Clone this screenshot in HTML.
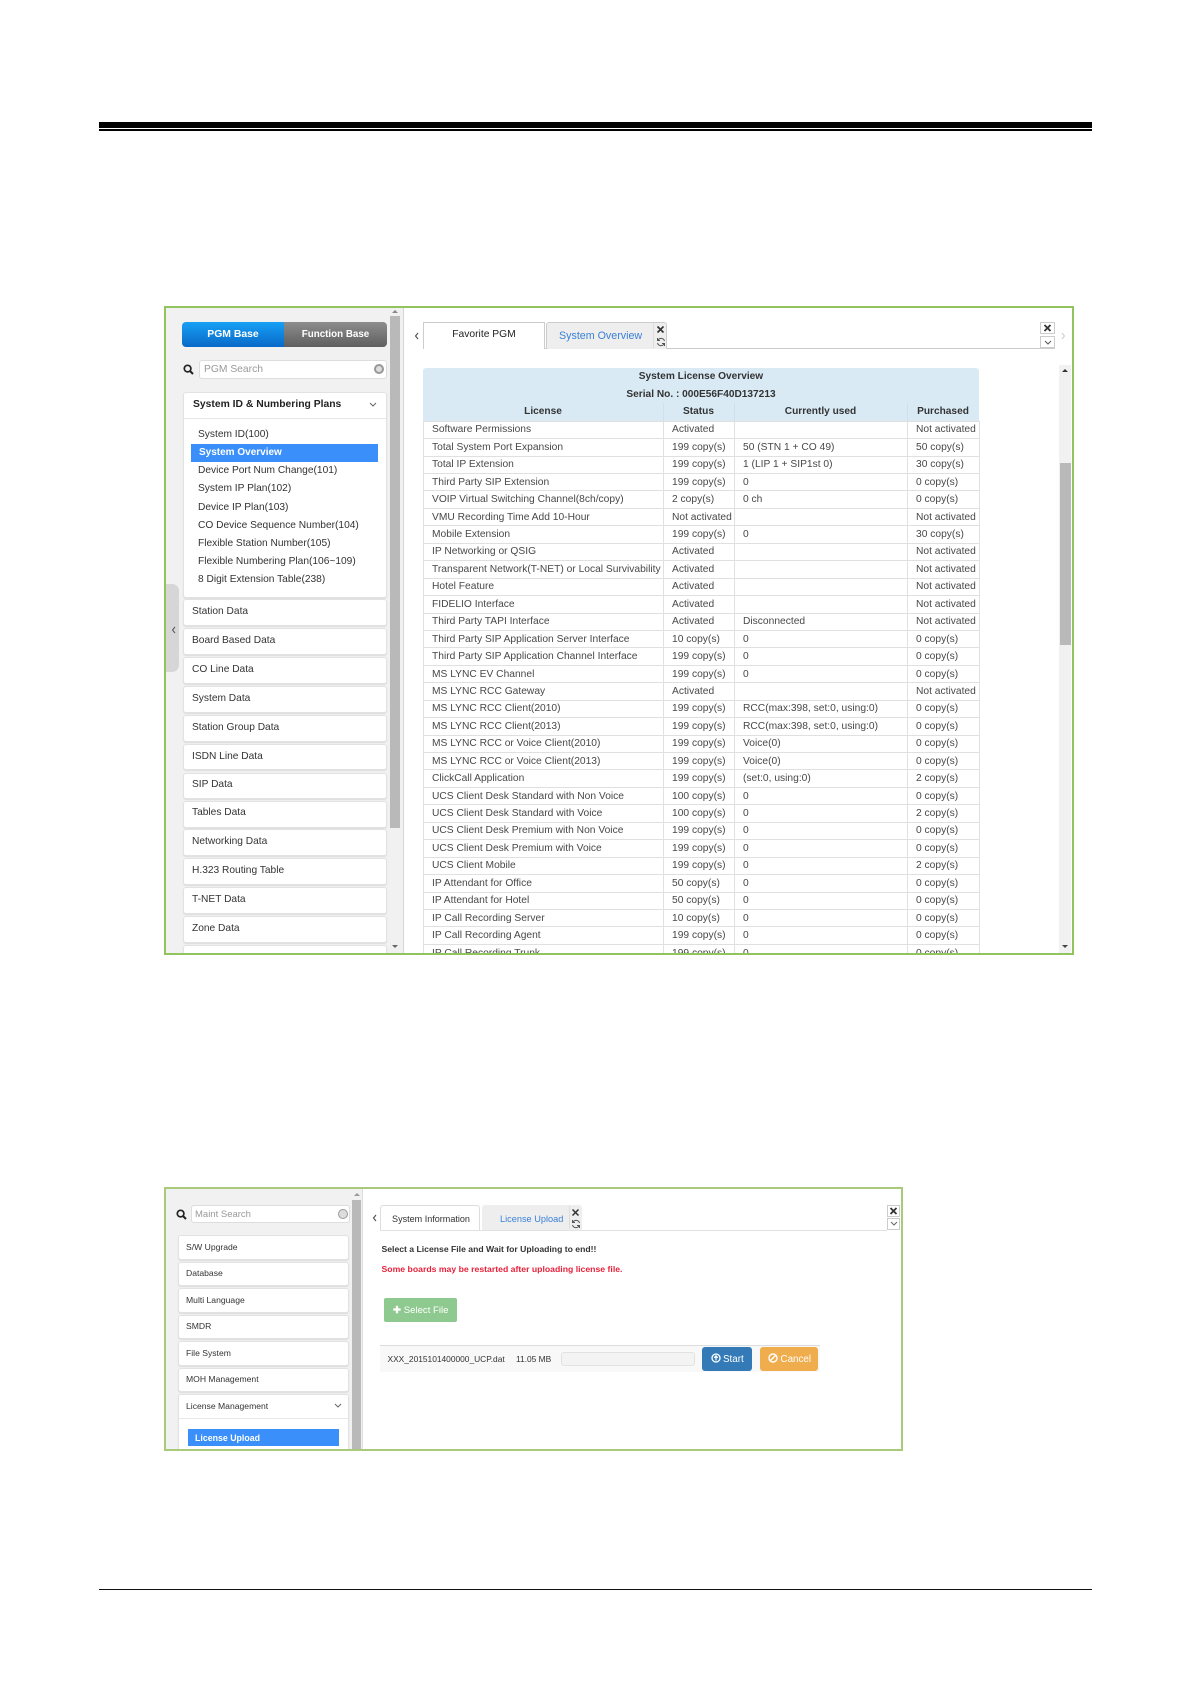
<!DOCTYPE html>
<html><head><meta charset="utf-8"><style>
html,body{margin:0;padding:0;background:#fff}
body{width:1191px;height:1684px;position:relative;overflow:hidden;font-family:"Liberation Sans",Arial,sans-serif;color:#333}
.a{position:absolute}
.t{position:absolute;white-space:nowrap;line-height:14px;height:14px}
.p{position:absolute;background:#fff;border:1px solid #e2e2e2;border-radius:3px;box-sizing:border-box;box-shadow:0 1px 1px #ddd}
.box{position:absolute;box-sizing:border-box;overflow:hidden;background:#fff}
.in{position:absolute;width:1191px;height:1684px;filter:blur(.3px)}
table{position:absolute;border-collapse:collapse;table-layout:fixed;font-size:10.25px;color:#484848}
td{border:1px solid #e0e0e0;height:17.45px;padding:0 0 0 8px;box-sizing:border-box;white-space:nowrap;overflow:hidden;line-height:15px}
.h{font-weight:bold;font-size:10.15px}
</style></head><body>
<div class="a" style="left:99px;top:122px;width:993px;height:6.3px;background:#000"></div>
<div class="a" style="left:99px;top:129px;width:993px;height:1.5px;background:#000"></div>
<div class="a" style="left:99px;top:1589px;width:993px;height:1.2px;background:#111"></div>

<!-- BOX 1 -->
<div class="box" style="left:164px;top:306px;width:910px;height:649px;border:2px solid #92c45e">
 <div class="in" style="left:-166px;top:-308px;font-size:10.2px">
  <div class="a" style="left:166px;top:308px;width:237px;height:646px;background:#f1f1f1;border-right:1px solid #d5d5d5"></div>
  <div class="a" style="left:390px;top:316px;width:10px;height:512px;background:#b9b9b9"></div>
  <div class="a" style="left:392px;top:310px;border:3px solid transparent;border-bottom:3px solid #888;border-top:0"></div>
  <div class="a" style="left:392px;top:945px;border:3px solid transparent;border-top:3px solid #666;border-bottom:0"></div>
  <div class="a" style="left:182px;top:322px;width:102px;height:25px;background:linear-gradient(#17a0f5,#0869c8);border-radius:4px 0 0 4px"></div>
  <div class="a" style="left:284px;top:322px;width:103px;height:25px;background:linear-gradient(#8d8d8d,#5f5f5f);border-radius:0 4px 4px 0"></div>
  <div class="t" style="left:182px;top:327.500px;width:102px;text-align:center;color:#fff;font-size:10.400px;font-weight:bold">PGM Base</div>
  <div class="t" style="left:284px;top:327.500px;width:103px;text-align:center;color:#fff;font-size:9.800px;font-weight:bold">Function Base</div>
  <svg class="a" style="left:183px;top:364px" width="11" height="11" viewBox="0 0 11 11"><circle cx="4.600" cy="4.600" r="3.300" fill="none" stroke="#222" stroke-width="1.700"/><path d="M7 7l3 3" stroke="#222" stroke-width="2"/></svg>
  <div class="a" style="left:199px;top:360px;width:188px;height:19px;background:#fff;border:1px solid #ddd;border-radius:3px;box-sizing:border-box"></div>
  <div class="t" style="left:204px;top:362.500px;color:#999;font-size:10.300px">PGM Search</div>
  <div class="a" style="left:374px;top:364px;width:10px;height:10px;border-radius:50%;background:#ddd;box-shadow:inset 0 0 0 2px #999"></div>

  <div class="p" style="left:183px;top:392px;width:204px;height:206px"></div>
  <div class="a" style="left:184px;top:418px;width:202px;height:1px;background:#e5e5e5"></div>
  <div class="t" style="left:193px;top:398px;font-weight:bold;color:#222;font-size:10.350px">System ID &amp; Numbering Plans</div>
  <svg class="a" style="left:369px;top:402px" width="8" height="6"><path d="M1 1l3 3 3-3" fill="none" stroke="#666"/></svg>
  <div class="a" style="left:191px;top:444px;width:187px;height:18px;background:#3a8ffa"></div>
  <div class="t" style="left:198px;top:427.500px">System ID(100)</div>
  <div class="t" style="left:199px;top:445.500px;color:#fff;font-weight:bold;font-size:10px">System Overview</div>
  <div class="t" style="left:198px;top:464px">Device Port Num Change(101)</div>
  <div class="t" style="left:198px;top:482px">System IP Plan(102)</div>
  <div class="t" style="left:198px;top:500.500px">Device IP Plan(103)</div>
  <div class="t" style="left:198px;top:518.500px">CO Device Sequence Number(104)</div>
  <div class="t" style="left:198px;top:536.500px">Flexible Station Number(105)</div>
  <div class="t" style="left:198px;top:555px">Flexible Numbering Plan(106~109)</div>
  <div class="t" style="left:198px;top:573px">8 Digit Extension Table(238)</div>

  <div class="a" style="left:166px;top:584px;width:13px;height:88px;background:#d6d6d6;border-radius:0 7px 7px 0"></div>
  <svg class="a" style="left:171px;top:626px" width="5" height="8"><path d="M4 1L1.500 4 4 7" fill="none" stroke="#555"/></svg>

  <div class="p" style="left:183px;top:599px;width:204px;height:26.500px"></div><div class="t" style="left:192px;top:605px">Station Data</div>
  <div class="p" style="left:183px;top:628px;width:204px;height:26.500px"></div><div class="t" style="left:192px;top:634px">Board Based Data</div>
  <div class="p" style="left:183px;top:657px;width:204px;height:26.500px"></div><div class="t" style="left:192px;top:662.500px">CO Line Data</div>
  <div class="p" style="left:183px;top:686px;width:204px;height:26.500px"></div><div class="t" style="left:192px;top:691.500px">System Data</div>
  <div class="p" style="left:183px;top:715px;width:204px;height:26.500px"></div><div class="t" style="left:192px;top:720.500px">Station Group Data</div>
  <div class="p" style="left:183px;top:743.500px;width:204px;height:26.500px"></div><div class="t" style="left:192px;top:749.500px">ISDN Line Data</div>
  <div class="p" style="left:183px;top:772.500px;width:204px;height:26.500px"></div><div class="t" style="left:192px;top:778px">SIP Data</div>
  <div class="p" style="left:183px;top:801px;width:204px;height:26.500px"></div><div class="t" style="left:192px;top:806px">Tables Data</div>
  <div class="p" style="left:183px;top:829px;width:204px;height:26.500px"></div><div class="t" style="left:192px;top:835px">Networking Data</div>
  <div class="p" style="left:183px;top:858px;width:204px;height:26.500px"></div><div class="t" style="left:192px;top:864px">H.323 Routing Table</div>
  <div class="p" style="left:183px;top:887px;width:204px;height:26.500px"></div><div class="t" style="left:192px;top:892.500px">T-NET Data</div>
  <div class="p" style="left:183px;top:916px;width:204px;height:26.500px"></div><div class="t" style="left:192px;top:921.500px">Zone Data</div>
  <div class="p" style="left:183px;top:945px;width:204px;height:26.500px"></div>

  <svg class="a" style="left:414px;top:332px" width="5" height="8"><path d="M4 1L1.500 4 4 7" fill="none" stroke="#444"/></svg>
  <div class="a" style="left:423px;top:348px;width:632px;height:1px;background:#ccc"></div>
  <div class="a" style="left:423px;top:322px;width:122px;height:27px;background:#fff;border:1px solid #ccc;border-bottom:0;box-sizing:border-box"></div>
  <div class="t" style="left:423px;top:328px;width:122px;text-align:center;color:#222;font-size:10.300px">Favorite PGM</div>
  <div class="a" style="left:546px;top:322px;width:121px;height:27px;background:#eee;border:1px solid #ccc;border-bottom:0;border-radius:3px 3px 0 0;box-sizing:border-box"></div>
  <div class="a" style="left:653px;top:323px;width:1px;height:25px;background:#ddd"></div>
  <div class="t" style="left:559px;top:328.500px;color:#3a80d8;font-size:10.700px">System Overview</div>
  <svg class="a" style="left:656px;top:325px" width="9" height="9"><path d="M1.500 1.500l6 6m0-6l-6 6" stroke="#333" stroke-width="1.600"/></svg>
  <svg class="a" style="left:656px;top:337px" width="10" height="10" viewBox="0 0 10 10"><path d="M8.500 4A3.600 3.600 0 0 0 2 3M1.500 6A3.600 3.600 0 0 0 8 7" fill="none" stroke="#555"/><path d="M1.500 1v2.500H4M8.500 9V6.500H6" fill="none" stroke="#555"/></svg>
  <div class="a" style="left:1040px;top:322px;width:15px;height:12px;border:1px solid #ccc;box-sizing:border-box"></div>
  <svg class="a" style="left:1043px;top:324px" width="9" height="8"><path d="M1.500 1l6 6m0-6l-6 6" stroke="#333" stroke-width="1.800"/></svg>
  <div class="a" style="left:1040px;top:336px;width:15px;height:12px;border:1px solid #ccc;box-sizing:border-box"></div>
  <svg class="a" style="left:1044px;top:340px" width="8" height="6"><path d="M1 1l3 3 3-3" fill="none" stroke="#555"/></svg>
  <svg class="a" style="left:1061px;top:332px" width="5" height="8"><path d="M1 1l2.500 3L1 7" fill="none" stroke="#ccc"/></svg>

  <div class="a" style="left:1059px;top:365px;width:12px;height:590px;background:#f1f1f1"></div>
  <div class="a" style="left:1060px;top:463px;width:11px;height:182px;background:#b9b9b9"></div>
  <div class="a" style="left:1062px;top:369px;border:3px solid transparent;border-bottom:3px solid #333;border-top:0"></div>
  <div class="a" style="left:1062px;top:945px;border:3px solid transparent;border-top:3px solid #444;border-bottom:0"></div>

  <div class="a" style="left:423px;top:368px;width:556px;height:53px;background:#d9eaf5;border-radius:3px 3px 0 0"></div>
  <div class="a" style="left:663px;top:403px;width:1px;height:18px;background:#cfe0ec"></div>
  <div class="a" style="left:734px;top:403px;width:1px;height:18px;background:#cfe0ec"></div>
  <div class="a" style="left:907px;top:403px;width:1px;height:18px;background:#cfe0ec"></div>
  <div class="t h" style="left:423px;top:370px;width:556px;text-align:center">System License Overview</div>
  <div class="t h" style="left:423px;top:387.500px;width:556px;text-align:center">Serial No. : 000E56F40D137213</div>
  <div class="t h" style="left:423px;top:405px;width:240px;text-align:center">License</div>
  <div class="t h" style="left:663px;top:405px;width:71px;text-align:center">Status</div>
  <div class="t h" style="left:734px;top:405px;width:173px;text-align:center">Currently used</div>
  <div class="t h" style="left:907px;top:405px;width:72px;text-align:center">Purchased</div>

  <table style="left:423px;top:420.700px;width:556px">
  <colgroup><col style="width:240px"><col style="width:71px"><col style="width:173px"><col style="width:72px"></colgroup>
  <tr><td>Software Permissions</td><td>Activated</td><td></td><td>Not activated</td></tr>
  <tr><td>Total System Port Expansion</td><td>199 copy(s)</td><td>50 (STN 1 + CO 49)</td><td>50 copy(s)</td></tr>
  <tr><td>Total IP Extension</td><td>199 copy(s)</td><td>1 (LIP 1 + SIP1st 0)</td><td>30 copy(s)</td></tr>
  <tr><td>Third Party SIP Extension</td><td>199 copy(s)</td><td>0</td><td>0 copy(s)</td></tr>
  <tr><td>VOIP Virtual Switching Channel(8ch/copy)</td><td>2 copy(s)</td><td>0 ch</td><td>0 copy(s)</td></tr>
  <tr><td>VMU Recording Time Add 10-Hour</td><td>Not activated</td><td></td><td>Not activated</td></tr>
  <tr><td>Mobile Extension</td><td>199 copy(s)</td><td>0</td><td>30 copy(s)</td></tr>
  <tr><td>IP Networking or QSIG</td><td>Activated</td><td></td><td>Not activated</td></tr>
  <tr><td>Transparent Network(T-NET) or Local Survivability</td><td>Activated</td><td></td><td>Not activated</td></tr>
  <tr><td>Hotel Feature</td><td>Activated</td><td></td><td>Not activated</td></tr>
  <tr><td>FIDELIO Interface</td><td>Activated</td><td></td><td>Not activated</td></tr>
  <tr><td>Third Party TAPI Interface</td><td>Activated</td><td>Disconnected</td><td>Not activated</td></tr>
  <tr><td>Third Party SIP Application Server Interface</td><td>10 copy(s)</td><td>0</td><td>0 copy(s)</td></tr>
  <tr><td>Third Party SIP Application Channel Interface</td><td>199 copy(s)</td><td>0</td><td>0 copy(s)</td></tr>
  <tr><td>MS LYNC EV Channel</td><td>199 copy(s)</td><td>0</td><td>0 copy(s)</td></tr>
  <tr><td>MS LYNC RCC Gateway</td><td>Activated</td><td></td><td>Not activated</td></tr>
  <tr><td>MS LYNC RCC Client(2010)</td><td>199 copy(s)</td><td>RCC(max:398, set:0, using:0)</td><td>0 copy(s)</td></tr>
  <tr><td>MS LYNC RCC Client(2013)</td><td>199 copy(s)</td><td>RCC(max:398, set:0, using:0)</td><td>0 copy(s)</td></tr>
  <tr><td>MS LYNC RCC or Voice Client(2010)</td><td>199 copy(s)</td><td>Voice(0)</td><td>0 copy(s)</td></tr>
  <tr><td>MS LYNC RCC or Voice Client(2013)</td><td>199 copy(s)</td><td>Voice(0)</td><td>0 copy(s)</td></tr>
  <tr><td>ClickCall Application</td><td>199 copy(s)</td><td>(set:0, using:0)</td><td>2 copy(s)</td></tr>
  <tr><td>UCS Client Desk Standard with Non Voice</td><td>100 copy(s)</td><td>0</td><td>0 copy(s)</td></tr>
  <tr><td>UCS Client Desk Standard with Voice</td><td>100 copy(s)</td><td>0</td><td>2 copy(s)</td></tr>
  <tr><td>UCS Client Desk Premium with Non Voice</td><td>199 copy(s)</td><td>0</td><td>0 copy(s)</td></tr>
  <tr><td>UCS Client Desk Premium with Voice</td><td>199 copy(s)</td><td>0</td><td>0 copy(s)</td></tr>
  <tr><td>UCS Client Mobile</td><td>199 copy(s)</td><td>0</td><td>2 copy(s)</td></tr>
  <tr><td>IP Attendant for Office</td><td>50 copy(s)</td><td>0</td><td>0 copy(s)</td></tr>
  <tr><td>IP Attendant for Hotel</td><td>50 copy(s)</td><td>0</td><td>0 copy(s)</td></tr>
  <tr><td>IP Call Recording Server</td><td>10 copy(s)</td><td>0</td><td>0 copy(s)</td></tr>
  <tr><td>IP Call Recording Agent</td><td>199 copy(s)</td><td>0</td><td>0 copy(s)</td></tr>
  <tr><td>IP Call Recording Trunk</td><td>199 copy(s)</td><td>0</td><td>0 copy(s)</td></tr>
  </table>
 </div>
</div>

<!-- BOX 2 -->
<div class="box" style="left:164px;top:1187px;width:739px;height:264px;border:2px solid #a9cb79">
 <div class="in" style="left:-166px;top:-1189px;font-size:8.600px">
  <div class="a" style="left:165px;top:1188px;width:197px;height:262px;background:#f1f1f1;border-right:1px solid #ddd"></div>
  <div class="a" style="left:352px;top:1200px;width:9px;height:250px;background:#b9b9b9"></div>
  <div class="a" style="left:354px;top:1193px;border:3px solid transparent;border-bottom:3px solid #999;border-top:0"></div>
  <svg class="a" style="left:176px;top:1209px" width="11" height="11" viewBox="0 0 11 11"><circle cx="4.600" cy="4.600" r="3.300" fill="none" stroke="#222" stroke-width="1.700"/><path d="M7 7l3 3" stroke="#222" stroke-width="2"/></svg>
  <div class="a" style="left:191px;top:1205px;width:159px;height:18px;background:#fff;border:1px solid #ddd;border-radius:3px;box-sizing:border-box"></div>
  <div class="t" style="left:195px;top:1208px;color:#999;font-size:9.500px">Maint Search</div>
  <div class="a" style="left:338px;top:1209px;width:8px;height:8px;border-radius:50%;background:#ddd;border:1.500px solid #999;box-sizing:content-box"></div>

  <div class="p" style="left:178px;top:1235px;width:171px;height:24.500px"></div><div class="t" style="left:186px;top:1240px">S/W Upgrade</div>
  <div class="p" style="left:178px;top:1262px;width:171px;height:24px"></div><div class="t" style="left:186px;top:1266px">Database</div>
  <div class="p" style="left:178px;top:1288px;width:171px;height:24.500px"></div><div class="t" style="left:186px;top:1293px">Multi Language</div>
  <div class="p" style="left:178px;top:1315px;width:171px;height:24px"></div><div class="t" style="left:186px;top:1319px">SMDR</div>
  <div class="p" style="left:178px;top:1341px;width:171px;height:24.500px"></div><div class="t" style="left:186px;top:1346px">File System</div>
  <div class="p" style="left:178px;top:1368px;width:171px;height:24px"></div><div class="t" style="left:186px;top:1372px">MOH Management</div>
  <div class="p" style="left:178px;top:1394px;width:171px;height:70px"></div><div class="t" style="left:186px;top:1398.500px">License Management</div>
  <div class="a" style="left:179px;top:1418px;width:169px;height:1px;background:#e8e8e8"></div>
  <svg class="a" style="left:334px;top:1403px" width="8" height="6"><path d="M1 1l3 3 3-3" fill="none" stroke="#666"/></svg>
  <div class="a" style="left:188px;top:1429px;width:151px;height:17px;background:#3a8ffa"></div>
  <div class="t" style="left:195px;top:1430.500px;color:#fff;font-weight:bold;font-size:8.800px">License Upload</div>

  <svg class="a" style="left:372px;top:1214px" width="5" height="8"><path d="M4 1L1.500 4 4 7" fill="none" stroke="#444"/></svg>
  <div class="a" style="left:380px;top:1229.500px;width:507px;height:1px;background:#e2e2e2"></div>
  <div class="a" style="left:380px;top:1205px;width:100px;height:25px;background:#fff;border:1px solid #ddd;border-bottom:0;border-radius:3px 3px 0 0;box-sizing:border-box"></div>
  <div class="t" style="left:380px;top:1211.500px;width:100px;text-align:center;font-size:9.050px;padding-left:2px;box-sizing:border-box">System Information</div>
  <div class="a" style="left:482px;top:1205px;width:100px;height:25px;background:#eee;border-radius:3px 3px 0 0"></div>
  <div class="a" style="left:569px;top:1206px;width:1px;height:23px;background:#ddd"></div>
  <div class="t" style="left:500px;top:1211.500px;color:#3a80d8;font-size:9.200px">License Upload</div>
  <svg class="a" style="left:571px;top:1208px" width="9" height="9"><path d="M1.500 1.500l6 6m0-6l-6 6" stroke="#333" stroke-width="1.500"/></svg>
  <svg class="a" style="left:571px;top:1219px" width="10" height="10" viewBox="0 0 10 10"><path d="M8.500 4A3.600 3.600 0 0 0 2 3M1.500 6A3.600 3.600 0 0 0 8 7" fill="none" stroke="#555"/><path d="M1.500 1v2.500H4M8.500 9V6.500H6" fill="none" stroke="#555"/></svg>
  <div class="a" style="left:887px;top:1205px;width:13px;height:12px;border:1px solid #ccc;box-sizing:border-box"></div>
  <svg class="a" style="left:889px;top:1207px" width="9" height="8"><path d="M1.500 1l6 6m0-6l-6 6" stroke="#333" stroke-width="1.800"/></svg>
  <div class="a" style="left:887px;top:1218px;width:13px;height:12px;border:1px solid #ccc;box-sizing:border-box"></div>
  <svg class="a" style="left:890px;top:1221px" width="8" height="6"><path d="M1 1l3 3 3-3" fill="none" stroke="#666"/></svg>

  <div class="t" style="left:381.500px;top:1242px;font-weight:bold;font-size:8.650px">Select a License File and Wait for Uploading to end!!</div>
  <div class="t" style="left:381.500px;top:1261.500px;font-weight:bold;font-size:8.680px;color:#e8203a">Some boards may be restarted after uploading license file.</div>
  <div class="a" style="left:384px;top:1298px;width:73px;height:24px;background:#8ec98f;border-radius:2px"></div>
  <div class="t" style="left:393px;top:1304px;color:#fff;font-size:9.600px"><b>✚</b> Select File</div>

  <div class="a" style="left:380px;top:1345px;width:440px;height:27px;background:#f8f8f8;border-top:1px solid #ddd;box-sizing:border-box"></div>
  <div class="t" style="left:387.500px;top:1352px;font-size:8.400px">XXX_2015101400000_UCP.dat</div>
  <div class="t" style="left:516px;top:1352px;font-size:8.400px">11.05 MB</div>
  <div class="a" style="left:561px;top:1352px;width:134px;height:14px;background:#f3f3f3;border:1px solid #e2e2e2;border-radius:3px;box-sizing:border-box"></div>
  <div class="a" style="left:702px;top:1347px;width:50px;height:24px;background:#337ab7;border-radius:3px"></div>
  <svg class="a" style="left:711px;top:1353px" width="10" height="10" viewBox="0 0 10 10"><circle cx="5" cy="5" r="4" fill="none" stroke="#fff" stroke-width="1.300"/><path d="M5 7.500V3M3.300 4.800L5 2.800l1.700 2" fill="none" stroke="#fff" stroke-width="1.200"/></svg>
  <div class="t" style="left:723px;top:1353px;color:#fff;font-size:9.800px">Start</div>
  <div class="a" style="left:760px;top:1347px;width:58px;height:24px;background:#f0ad4e;border-radius:3px"></div>
  <svg class="a" style="left:768px;top:1353px" width="10" height="10" viewBox="0 0 10 10"><circle cx="5" cy="5" r="4" fill="none" stroke="#fff" stroke-width="1.400"/><path d="M7.500 2.500l-5 5" stroke="#fff" stroke-width="1.400"/></svg>
  <div class="t" style="left:780.500px;top:1353px;color:#fff;font-size:9.800px">Cancel</div>
 </div>
</div>
</body></html>
